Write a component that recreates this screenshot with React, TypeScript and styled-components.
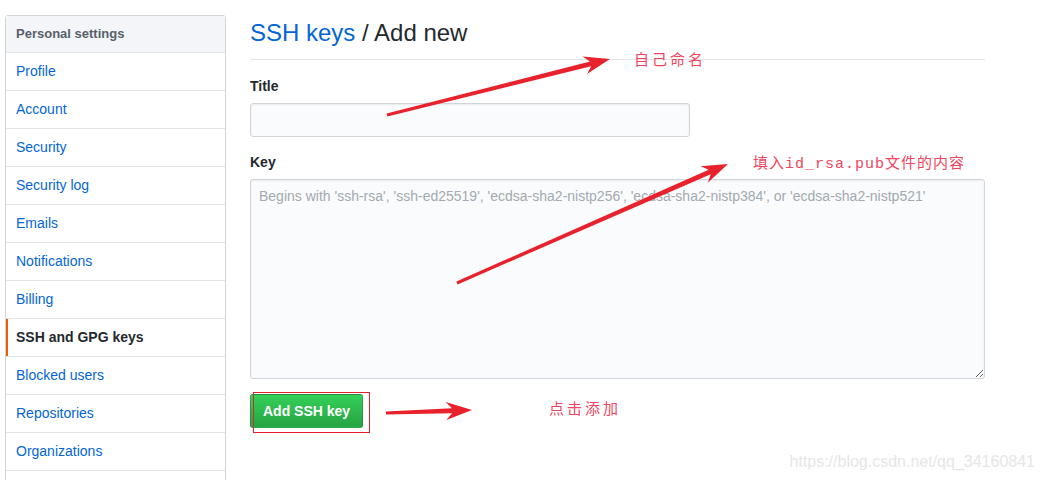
import styled, { createGlobalStyle } from 'styled-components';

const GlobalStyle = createGlobalStyle`
  html, body {
    margin: 0;
    padding: 0;
    background: #fff;
  }
  body {
    font-family: "Liberation Sans", Arial, sans-serif;
    font-size: 14px;
    color: #24292e;
  }
`

const Page = styled.div`
  position: relative;
  display: flex;
  align-items: flex-start;
  gap: 24px;
  padding: 15px 0 0 5px;
  height: 480px;
  box-sizing: border-box;
  overflow: hidden;
`

const Menu = styled.nav`
  width: 221px;
  flex-shrink: 0;
  border: 1px solid #d1d5da;
  border-radius: 3px;
  box-sizing: border-box;
  background: #fff;
`

const MenuHeading = styled.div`
  padding: 8px 10px;
  line-height: 20px;
  font-size: 13px;
  font-weight: bold;
  color: #586069;
  background: #f3f5f8;
  border-bottom: 1px solid #e1e4e8;
`

const MenuItem = styled.a<{ $selected?: boolean }>`
  position: relative;
  display: block;
  padding: 8px 10px;
  line-height: 21px;
  min-height: 21px;
  font-size: 14px;
  text-decoration: none;
  color: ${p => (p.$selected ? '#24292e' : '#0366d6')};
  font-weight: ${p => (p.$selected ? 'bold' : 'normal')};
  border-bottom: 1px solid #e1e4e8;

  &::before {
    content: '';
    display: ${p => (p.$selected ? 'block' : 'none')};
    position: absolute;
    left: 0;
    top: 0;
    bottom: 0;
    width: 2px;
    background: #e36209;
  }
`

const Main = styled.main`
  width: 735px;
  flex-shrink: 0;
`

const Subhead = styled.div`
  padding-bottom: 8px;
  margin-bottom: 16px;
  border-bottom: 1px solid #e1e4e8;
`

const Heading = styled.h2`
  margin: 0;
  font-size: 24px;
  font-weight: normal;
  line-height: 36px;
  color: #24292e;

  a {
    color: #0366d6;
    text-decoration: none;
  }
`

const FormGroup = styled.div`
  margin-bottom: 15px;
`

const Label = styled.label`
  display: block;
  margin-bottom: 6px;
  font-weight: bold;
  font-size: 14px;
  line-height: 21px;
`

const fieldBase = `
  display: block;
  box-sizing: border-box;
  font-family: "Liberation Sans", Arial, sans-serif;
  font-size: 14px;
  line-height: 20px;
  color: #24292e;
  background: #fafbfc;
  border: 1px solid #d1d5da;
  border-radius: 3px;
  box-shadow: inset 0 1px 2px rgba(27, 31, 35, 0.075);
  padding: 6px 8px;
  outline: none;
`

const TextInput = styled.input`
  ${fieldBase}
  width: 440px;
  height: 34px;
`

const TextArea = styled.textarea`
  ${fieldBase}
  width: 735px;
  height: 200px;
  resize: vertical;

  &::placeholder {
    color: #a3aab1;
  }
`

const PrimaryButton = styled.button`
  display: inline-block;
  height: 34px;
  padding: 6px 12px;
  box-sizing: border-box;
  font-family: "Liberation Sans", Arial, sans-serif;
  font-size: 14px;
  font-weight: bold;
  line-height: 20px;
  color: #fff;
  background-image: linear-gradient(-180deg, #34d058 0%, #28a745 90%);
  border: 1px solid rgba(27, 31, 35, 0.2);
  border-radius: 3px;
  cursor: pointer;
`

/* annotations drawn on top of the screenshot */
const Overlay = styled.svg`
  position: absolute;
  left: 0;
  top: 0;
  pointer-events: none;
`

const Note = styled.span<{ $x: number; $y: number; $spacing?: number }>`
  position: absolute;
  left: ${p => p.$x}px;
  top: ${p => p.$y}px;
  font-family: "Liberation Mono", "Noto Sans CJK SC", monospace;
  font-size: 15px;
  line-height: 20px;
  letter-spacing: ${p => p.$spacing ?? 0}px;
  color: #ef4561;
  white-space: nowrap;
`

const Highlight = styled.div`
  position: absolute;
  left: 253px;
  top: 392px;
  width: 117px;
  height: 41px;
  box-sizing: border-box;
  border: 1px solid #e0202a;
`

const Watermark = styled.div`
  position: absolute;
  right: 7px;
  bottom: 9px;
  font-size: 16px;
  color: #e6e6e6;
`

const menuItems = [
  'Profile',
  'Account',
  'Security',
  'Security log',
  'Emails',
  'Notifications',
  'Billing',
  'SSH and GPG keys',
  'Blocked users',
  'Repositories',
  'Organizations',
]

type Pt = [number, number]

function arrowPoints(tail: Pt, tip: Pt, head = 26, half = 9, notch = 6, w0 = 1.5, w1 = 2.5) {
  const dx = tip[0] - tail[0]
  const dy = tip[1] - tail[1]
  const len = Math.hypot(dx, dy)
  const ux = dx / len
  const uy = dy / len
  const nx = -uy
  const ny = ux
  const base: Pt = [tip[0] - ux * head, tip[1] - uy * head]
  const inner: Pt = [tip[0] - ux * (head - notch), tip[1] - uy * (head - notch)]
  const pts: Pt[] = [
    [tail[0] + nx * w0, tail[1] + ny * w0],
    [inner[0] + nx * w1, inner[1] + ny * w1],
    [base[0] + nx * half, base[1] + ny * half],
    tip,
    [base[0] - nx * half, base[1] - ny * half],
    [inner[0] - nx * w1, inner[1] - ny * w1],
    [tail[0] - nx * w0, tail[1] - ny * w0],
  ]
  return pts.map(p => `${p[0].toFixed(1)},${p[1].toFixed(1)}`).join(' ')
}

const arrows: [Pt, Pt][] = [
  [[387, 115], [610, 59]],
  [[457, 283], [728, 164]],
  [[386, 413], [472, 410]],
]

export default function App() {
  return (
    <>
      <GlobalStyle />
      <Page>
        <Menu>
          <MenuHeading>Personal settings</MenuHeading>
          {menuItems.map(item => (
            <MenuItem key={item} href="#" $selected={item === 'SSH and GPG keys'}>
              {item}
            </MenuItem>
          ))}
          {/* next row continues below the fold */}
          <MenuItem href="#" />
        </Menu>

        <Main>
          <Subhead>
            <Heading>
              <a href="#">SSH keys</a> / Add new
            </Heading>
          </Subhead>
          <FormGroup>
            <Label htmlFor="title">Title</Label>
            <TextInput id="title" type="text" />
          </FormGroup>
          <FormGroup>
            <Label htmlFor="key">Key</Label>
            <TextArea
              id="key"
              placeholder="Begins with 'ssh-rsa', 'ssh-ed25519', 'ecdsa-sha2-nistp256', 'ecdsa-sha2-nistp384', or 'ecdsa-sha2-nistp521'"
            />
          </FormGroup>
          <PrimaryButton type="button">Add SSH key</PrimaryButton>
        </Main>

        <Highlight />
        <Overlay width={1042} height={480}>
          {arrows.map(([a, b], i) => (
            <polygon key={i} points={arrowPoints(a, b)} fill="#e8222c" />
          ))}
        </Overlay>
        <Note $x={634} $y={52} $spacing={3}>自己命名</Note>
        <Note $x={753} $y={155} $spacing={1}>填入id_rsa.pub文件的内容</Note>
        <Note $x={549} $y={401} $spacing={3}>点击添加</Note>
        <Watermark>https://blog.csdn.net/qq_34160841</Watermark>
      </Page>
    </>
  );
}
